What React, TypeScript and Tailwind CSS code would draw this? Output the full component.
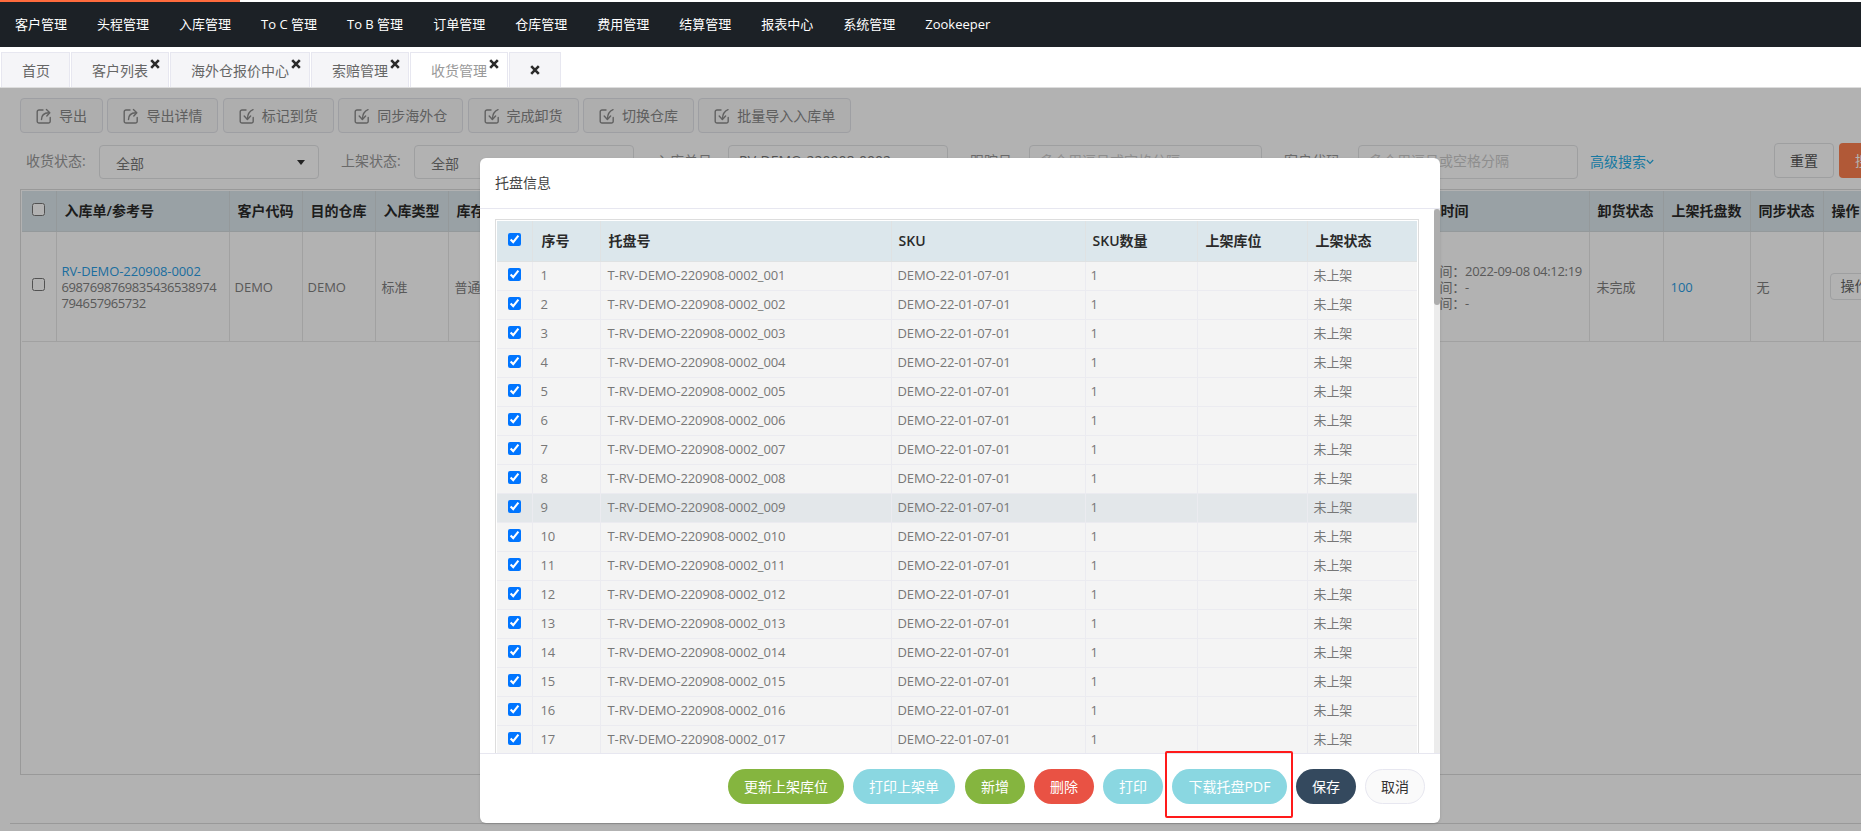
import React from 'react';

const navItems = ['客户管理', '头程管理', '入库管理', 'To C 管理', 'To B 管理', '订单管理', '仓库管理', '费用管理', '结算管理', '报表中心', '系统管理', 'Zookeeper'];

const tabs = [
  { name: '首页', closable: false, active: false },
  { name: '客户列表', closable: true, active: false },
  { name: '海外仓报价中心', closable: true, active: false },
  { name: '索赔管理', closable: true, active: false },
  { name: '收货管理', closable: true, active: true },
];

const toolButtons = [
  { name: '导出', out: true },
  { name: '导出详情', out: true },
  { name: '标记到货', out: false },
  { name: '同步海外仓', out: false },
  { name: '完成卸货', out: false },
  { name: '切换仓库', out: false },
  { name: '批量导入入库单', out: false },
];

const pallets = Array.from({ length: 18 }, (_, i) => i + 1);

function CloseMark({ className }: { className?: string }) {
  return (
    <svg viewBox="0 0 10 10" className={className} fill="none" stroke="#2b2b2b" strokeWidth="2.6">
      <path d="M1.2 1.2 8.8 8.8M8.8 1.2 1.2 8.8" />
    </svg>
  );
}

function ToolIcon({ out }: { out: boolean }) {
  return (
    <svg viewBox="0 0 16 16" className="h-4 w-4 shrink-0" fill="none" stroke="#8c8c8c" strokeWidth="1.4" strokeLinecap="round" strokeLinejoin="round">
      <path d="M7 2H3a1.8 1.8 0 0 0-1.8 1.8v9.4A1.8 1.8 0 0 0 3 15h9.4a1.8 1.8 0 0 0 1.8-1.8V9.5" />
      {out ? (
        <>
          <path d="M5.5 11.5C5.5 7.5 8 5 12.8 4.8" />
          <path d="M10.4 1.6 13.8 4.7 10.8 8" />
        </>
      ) : (
        <>
          <path d="M14 1.6C10.4 3 8.6 6 8.4 11" />
          <path d="M5.2 8 8.4 11.4 11.6 8" />
        </>
      )}
    </svg>
  );
}

function Caret() {
  return (
    <svg viewBox="0 0 8 5" className="h-[5px] w-2" fill="#333">
      <path d="M0 0h8L4 5z" />
    </svg>
  );
}

function FilterSelect({ label, className }: { label: string; className?: string }) {
  return (
    <div className={`flex shrink-0 items-center mt-[2px] ${className ?? ''}`}>
      <span className="w-[73px] pb-[3px] text-[14px] text-[#999]">{label}</span>
      <div className="flex h-[34px] w-[220px] items-center justify-between rounded border border-[#e3e4e6] pl-4 pr-[13px] text-[14px] text-[#777]">
        <span className="mt-[2px]">全部</span>
        <Caret />
      </div>
    </div>
  );
}

function FilterInput({ label, labelWidth, value, placeholder, inputWidth, className }: { label: string; labelWidth: string; value?: string; placeholder: string; inputWidth: string; className?: string }) {
  return (
    <div className={`flex shrink-0 items-center mt-[2px] ${className ?? ''}`}>
      <span className={`${labelWidth} pb-[3px] text-[14px] text-[#999]`}>{label}</span>
      <input
        readOnly
        defaultValue={value}
        placeholder={placeholder}
        className={`h-[34px] ${inputWidth} rounded border border-[#e3e4e6] px-[10px] pb-[3px] text-[14px] text-[#777] placeholder:text-[#ccc]`}
      />
    </div>
  );
}

export default function App() {
  return (
    <div className="flex h-[831px] w-[1861px] flex-col overflow-hidden bg-white font-['Open_Sans','Noto_Sans_CJK_SC',sans-serif]">
      <div className="h-[2px] w-[240px] shrink-0 bg-[#ff6b3d]" />
      <nav className="flex h-[45px] shrink-0 items-center bg-[#1c2126] text-[13px] text-white">
        {navItems.map((item) => (
          <span key={item} className="px-[15px]">
            {item}
          </span>
        ))}
      </nav>

      <div className="flex h-[41px] shrink-0 items-end gap-[1px] border-b border-[#dddddd] pl-[1px]">
        {tabs.map((tab) => (
          <div
            key={tab.name}
            className={`relative flex h-[35px] items-center border border-b-0 border-[#e7e7f0] pl-[20px] text-[14px] ${tab.closable ? 'pr-[20px]' : 'pr-[19px]'} ${tab.active ? 'bg-white text-[#999]' : 'bg-[#f5f5f8] text-[#666]'}`}
          >
            {tab.name}
            {tab.closable && <CloseMark className="absolute right-[8px] top-[6px] h-[10px] w-[10px]" />}
          </div>
        ))}
        <div className="flex h-[35px] w-[52px] items-center justify-center border border-b-0 border-[#e7e7f0] bg-[#f5f5f8]">
          <CloseMark className="h-[10px] w-[10px]" />
        </div>
      </div>

      <main className="relative flex min-h-0 flex-1 flex-col pt-[10px]">
        <div className="flex shrink-0 gap-[4.4px] pl-[20px]">
          {toolButtons.map((btn) => (
            <button key={btn.name} className="flex h-[35px] shrink-0 items-center gap-[7px] rounded border border-[#e3e4ea] bg-[#f9f9f9] px-[15px] text-[14px] text-[#888]">
              <ToolIcon out={btn.out} />
              {btn.name}
            </button>
          ))}
        </div>

        <div className="mt-[10px] flex h-[36px] shrink-0 items-start pl-[26px]">
          <FilterSelect label="收货状态:" />
          <FilterSelect label="上架状态:" className="ml-[22px]" />
          <FilterInput label="入库单号" labelWidth="w-[72px]" inputWidth="w-[220px]" value="RV-DEMO-220908-0002" placeholder="" className="ml-[22px]" />
          <FilterInput label="跟踪号" labelWidth="w-[59px]" inputWidth="w-[233px]" placeholder="多个用逗号或空格分隔" className="ml-[22px]" />
          <FilterInput label="客户代码" labelWidth="w-[74px]" inputWidth="w-[220px]" placeholder="多个用逗号或空格分隔" className="ml-[22px]" />
          <span className="ml-[12px] mt-[8px] flex shrink-0 items-center text-[14px] text-[#23aee8]">
            高级搜索
            <svg viewBox="0 0 8 6" className="h-[6px] w-[8px]" fill="none" stroke="#23aee8" strokeWidth="1.2">
              <path d="M.8 1 4 4.4 7.2 1" />
            </svg>
          </span>
          <button className="ml-[120px] h-[35px] w-[60px] shrink-0 rounded border border-[#e3e4e6] text-[14px] text-[#555]">重置</button>
          <button className="ml-[5px] h-[35px] w-[60px] shrink-0 rounded bg-[#fe8050] text-[14px] text-white">搜索</button>
        </div>

        <div className="ml-[20px] mt-[10px] h-[586px] w-[1900px] shrink-0 border border-[#dcdcdc] p-[1px]">
          <table className="w-[1881px] table-fixed border-collapse">
            <colgroup>
              <col className="w-[34px]" />
              <col className="w-[173px]" />
              <col className="w-[73px]" />
              <col className="w-[73px]" />
              <col className="w-[73px]" />
              <col className="w-[73px]" />
              <col className="w-[872px]" />
              <col className="w-[196px]" />
              <col className="w-[74px]" />
              <col className="w-[87px]" />
              <col className="w-[73px]" />
              <col className="w-[80px]" />
            </colgroup>
            <thead>
              <tr className="h-[40px] bg-[#dce7ec] text-left text-[14px] font-semibold text-[#2a2a2a]">
                <th className="border-r border-b border-[#d5dcdf] text-center font-semibold">
                  <input type="checkbox" className="mx-auto mb-[2px] block" />
                </th>
                <th className="border-r border-b border-[#d5dcdf] pl-[8px] font-semibold">入库单/参考号</th>
                <th className="border-r border-b border-[#d5dcdf] pl-[8px] font-semibold">客户代码</th>
                <th className="border-r border-b border-[#d5dcdf] pl-[8px] font-semibold">目的仓库</th>
                <th className="border-r border-b border-[#d5dcdf] pl-[8px] font-semibold">入库类型</th>
                <th className="border-r border-b border-[#d5dcdf] pl-[8px] font-semibold">库存类型</th>
                <th className="border-r border-b border-[#d5dcdf]" />
                <th className="border-r border-b border-[#d5dcdf] pl-[5px] font-semibold">入库单时间</th>
                <th className="border-r border-b border-[#d5dcdf] pl-[8px] font-semibold">卸货状态</th>
                <th className="border-r border-b border-[#d5dcdf] pl-[8px] font-semibold">上架托盘数</th>
                <th className="border-r border-b border-[#d5dcdf] pl-[8px] font-semibold">同步状态</th>
                <th className="border-b border-[#d5dcdf] pl-[8px] font-semibold">操作</th>
              </tr>
            </thead>
            <tbody>
              <tr className="h-[110px] text-[13px] leading-[16px] text-[#808080]">
                <td className="border-r border-b border-[#e7e7e7]">
                  <input type="checkbox" className="mx-auto mb-[4px] block" />
                </td>
                <td className="border-r border-b border-[#e7e7e7] pl-[5px] pt-[2px]">
                  <span className="block tracking-[-0.1px] text-[#2a9de4]">RV-DEMO-220908-0002</span>
                  <span className="block tracking-[-0.4px]">6987698769835436538974</span>
                  <span className="block tracking-[-0.4px]">794657965732</span>
                </td>
                <td className="border-r border-b border-[#e7e7e7] pl-[5px] pt-[2px]">DEMO</td>
                <td className="border-r border-b border-[#e7e7e7] pl-[5px] pt-[2px]">DEMO</td>
                <td className="border-r border-b border-[#e7e7e7] pl-[6px] pt-[2px]">标准</td>
                <td className="border-r border-b border-[#e7e7e7] pl-[6px] pt-[2px]">普通</td>
                <td className="border-r border-b border-[#e7e7e7]" />
                <td className="border-r border-b border-[#e7e7e7] pl-[8px] pt-[2px] whitespace-nowrap tracking-[-0.3px]">
                  <div>到货时间：2022-09-08 04:12:19</div>
                  <div>卸货时间：-</div>
                  <div>上架时间：-</div>
                </td>
                <td className="border-r border-b border-[#e7e7e7] pl-[7px] pt-[2px]">未完成</td>
                <td className="border-r border-b border-[#e7e7e7] pl-[7px] pt-[2px] text-[#2a9de4]">100</td>
                <td className="border-r border-b border-[#e7e7e7] pl-[6px] pt-[2px]">无</td>
                <td className="border-b border-[#e7e7e7] pl-[6px]">
                  <button className="h-[27px] w-[70px] rounded border border-[#e3e4e6] pl-[10px] text-left text-[14px] text-[#666]">操作</button>
                </td>
              </tr>
            </tbody>
          </table>
        </div>

        <div className="ml-[10px] mt-[48px] border-t border-[#dcdcdc]" />

        <div className="absolute inset-0 bg-black/30" />

        {/* 托盘信息弹窗 */}
        <div className="absolute left-[480px] top-[70px] flex h-[665px] w-[960px] flex-col overflow-hidden rounded-md bg-white shadow-sm">
          <div className="flex h-[51px] shrink-0 items-center border-b border-[#e7e7f0] pb-[2px] pl-[15px] text-[14px] text-[#444]">托盘信息</div>

          <div className="flex min-h-0 flex-1">
            <div className="min-w-0 flex-1 overflow-hidden px-[15px] pt-[10px]">
              <div className="border border-[#dddddd] p-[1px]">
                <table className="w-[920px] table-fixed border-collapse">
                  <colgroup>
                    <col className="w-[35px]" />
                    <col className="w-[68px]" />
                    <col className="w-[291px]" />
                    <col className="w-[194px]" />
                    <col className="w-[112px]" />
                    <col className="w-[110px]" />
                    <col className="w-[110px]" />
                  </colgroup>
                  <thead>
                    <tr className="h-[40px] bg-[#dce7ec] text-left text-[14px] font-semibold text-[#2a2a2a]">
                      <th className="border-r border-b border-[#dfe2e3] font-semibold">
                        <input type="checkbox" defaultChecked className="mx-auto mb-[3px] block" />
                      </th>
                      <th className="border-r border-b border-[#dfe2e3] pl-[9px] pb-[1px] font-semibold">序号</th>
                      <th className="border-r border-b border-[#dfe2e3] pb-[1px] pl-[8px] font-semibold">托盘号</th>
                      <th className="border-r border-b border-[#dfe2e3] pb-[1px] pl-[7px] font-semibold">SKU</th>
                      <th className="border-r border-b border-[#dfe2e3] pb-[1px] pl-[7px] font-semibold">SKU数量</th>
                      <th className="border-r border-b border-[#dfe2e3] pb-[1px] pl-[8px] font-semibold">上架库位</th>
                      <th className="border-b border-[#dfe2e3] pb-[1px] pl-[8px] font-semibold">上架状态</th>
                    </tr>
                  </thead>
                  <tbody>
                    {pallets.map((n) => (
                      <tr key={n} className={`h-[29px] text-[13px] tracking-[-0.1px] text-[#777] ${n === 9 ? 'bg-[#e3e7ea]' : 'bg-[#f4f4f4]'}`}>
                        <td className="border-r border-b border-[#ebebf0]">
                          <input type="checkbox" defaultChecked className="mx-auto mb-[3px] block" />
                        </td>
                        <td className="border-r border-b border-[#ebebf0] pl-[8px] pt-[1px]">{n}</td>
                        <td className="border-r border-b border-[#ebebf0] pl-[7px] pt-[1px]">{`T-RV-DEMO-220908-0002_${String(n).padStart(3, '0')}`}</td>
                        <td className="border-r border-b border-[#ebebf0] pl-[6px] pt-[1px]">DEMO-22-01-07-01</td>
                        <td className="border-r border-b border-[#ebebf0] pl-[5px] pt-[1px]">1</td>
                        <td className="border-r border-b border-[#ebebf0]" />
                        <td className="border-b border-[#ebebf0] pl-[6px] pt-[1px]">未上架</td>
                      </tr>
                    ))}
                  </tbody>
                </table>
              </div>
            </div>
            <div className="w-[6px] shrink-0 bg-[#ececec]">
              <div className="h-[96px] rounded-[3px] bg-[#adadad]" />
            </div>
          </div>

          <div className="flex h-[70px] shrink-0 justify-end gap-[9px] border-t border-[#e7e7f0] pr-[15px] pt-[15px] text-[14px] text-white">
            <button className="h-[35px] w-[116px] rounded-full bg-[#85b53f]">更新上架库位</button>
            <button className="mr-[1px] h-[35px] w-[102px] rounded-full bg-[#8ad7e1]">打印上架单</button>
            <button className="h-[35px] w-[60px] rounded-full bg-[#85b53f]">新增</button>
            <button className="h-[35px] w-[60px] rounded-full bg-[#e95244]">删除</button>
            <button className="h-[35px] w-[60px] rounded-full bg-[#8ad7e1]">打印</button>
            <button className="h-[35px] w-[115px] rounded-full bg-[#8ad7e1]">下载托盘PDF</button>
            <button className="h-[35px] w-[60px] rounded-full bg-[#34495e]">保存</button>
            <button className="h-[35px] w-[60px] rounded-full border border-[#e7e7f0] bg-[#fafafa] text-[#333]">取消</button>
          </div>

          <div className="absolute left-[685px] top-[593px] h-[67px] w-[128px] rounded-[2px] border-2 border-[#ff1a1a]" />
        </div>
      </main>
    </div>
  );
}
